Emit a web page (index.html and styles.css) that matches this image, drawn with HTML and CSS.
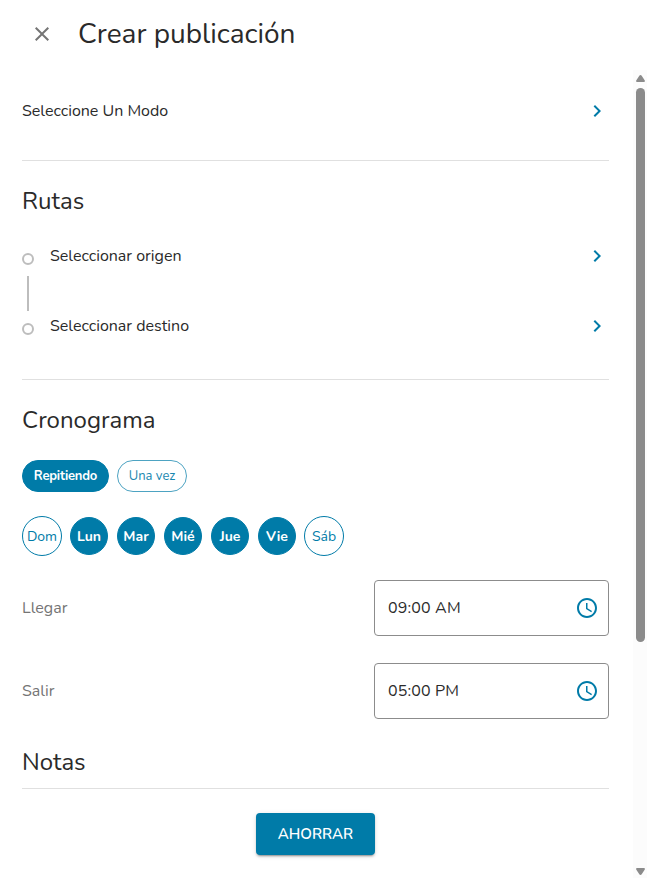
FILE: index.html
```html
<!DOCTYPE html>
<html lang="es">
<head>
  <meta charset="UTF-8">
  <meta name="viewport" content="width=device-width, initial-scale=1.0">
  <title>Crear publicación</title>
  <link rel="stylesheet" href="styles.css">
</head>
<body>
  <header class="header">
    <button class="close" aria-label="Cerrar">
      <svg width="24" height="24" viewBox="0 0 24 24"><path d="M19 6.41 17.59 5 12 10.59 6.41 5 5 6.41 10.59 12 5 17.59 6.41 19 12 13.41 17.59 19 19 17.59 13.41 12z"/></svg>
    </button>
    <h1 class="title">Crear publicación</h1>
  </header>
  <div class="container">
    <main class="content">
      <section class="mode">
        <span>Seleccione Un Modo</span>
        <svg class="chevron" width="24" height="24" viewBox="0 0 24 24"><path d="M10 6 8.59 7.41 13.17 12l-4.58 4.59L10 18l6-6z"/></svg>
      </section>

      <section class="routes">
        <h2>Rutas</h2>
        <div class="route">
          <span class="dot"></span>
          <span>Seleccionar origen</span>
          <svg class="chevron" width="24" height="24" viewBox="0 0 24 24"><path d="M10 6 8.59 7.41 13.17 12l-4.58 4.59L10 18l6-6z"/></svg>
        </div>
        <div class="line"></div>
        <div class="route">
          <span class="dot"></span>
          <span>Seleccionar destino</span>
          <svg class="chevron" width="24" height="24" viewBox="0 0 24 24"><path d="M10 6 8.59 7.41 13.17 12l-4.58 4.59L10 18l6-6z"/></svg>
        </div>
      </section>

      <section class="schedule">
        <h2>Cronograma</h2>
        <div class="chips">
          <button class="chip active">Repitiendo</button>
          <button class="chip once">Una vez</button>
        </div>
        <div class="days">
          <button class="day">Dom</button>
          <button class="day active">Lun</button>
          <button class="day active">Mar</button>
          <button class="day active">Mié</button>
          <button class="day active">Jue</button>
          <button class="day active">Vie</button>
          <button class="day">Sáb</button>
        </div>
        <div class="time-row">
          <label>Llegar</label>
          <div class="time-input">
            <span>09:00 AM</span>
            <svg width="24" height="24" viewBox="0 0 24 24"><path d="M11.99 2C6.47 2 2 6.48 2 12s4.47 10 9.99 10C17.52 22 22 17.52 22 12S17.52 2 11.99 2zM12 20c-4.42 0-8-3.58-8-8s3.58-8 8-8 8 3.58 8 8-3.58 8-8 8zm.5-13H11v6l5.25 3.15.75-1.23-4.5-2.67z"/></svg>
          </div>
        </div>
        <div class="time-row">
          <label>Salir</label>
          <div class="time-input">
            <span>05:00 PM</span>
            <svg width="24" height="24" viewBox="0 0 24 24"><path d="M11.99 2C6.47 2 2 6.48 2 12s4.47 10 9.99 10C17.52 22 22 17.52 22 12S17.52 2 11.99 2zM12 20c-4.42 0-8-3.58-8-8s3.58-8 8-8 8 3.58 8 8-3.58 8-8 8zm.5-13H11v6l5.25 3.15.75-1.23-4.5-2.67z"/></svg>
          </div>
        </div>
      </section>

      <section class="notes">
        <h2>Notas</h2>
      </section>
      <div class="actions">
        <button class="save">AHORRAR</button>
      </div>
    </main>
    <div class="scrollbar">
      <svg width="9" height="7" viewBox="0 0 9 7"><path d="M4.5 0Q5.2 0 5.7.8L8.8 5.6Q9.2 7 8 7H1Q-.2 7 .2 5.6L3.3.8Q3.8 0 4.5 0z"/></svg>
      <div class="thumb"></div>
      <svg class="down" width="9" height="7" viewBox="0 0 9 7"><path d="M4.5 7Q5.2 7 5.7 6.2L8.8 1.4Q9.2 0 8 0H1Q-.2 0 .2 1.4L3.3 6.2Q3.8 7 4.5 7z"/></svg>
    </div>
  </div>
</body>
</html>
```
FILE: styles.css
```css
* {
  margin: 0;
  padding: 0;
  box-sizing: border-box;
}

body {
  height: 878px;
  overflow: hidden;
  background-color: #fff;
  color: #2a2a2a;
  font-family: Nunito, Lato, sans-serif;
  font-size: 16px;
  line-height: 24px;
}

button {
  font-family: inherit;
  cursor: pointer;
}

svg {
  display: block;
  flex-shrink: 0;
}

.header {
  display: flex;
  align-items: center;
  height: 70px;
  padding: 0 30px 2px;
}

.close {
  border: none;
  background: none;
  fill: #757575;
}

.title {
  margin-left: 24px;
  font-size: 28px;
  font-weight: 400;
  line-height: 36px;
}

.container {
  display: flex;
  height: 808px;
}

.content {
  flex: 1;
  padding: 0 24px 0 22px;
}

.content h2 {
  font-size: 24px;
  font-weight: 400;
  line-height: 32px;
}

.mode {
  display: flex;
  align-items: center;
  justify-content: space-between;
  height: 91px;
  padding-bottom: 8px;
  border-bottom: 1px solid #e0e0e0;
}

.chevron {
  fill: #007ba8;
}

.routes {
  height: 219px;
  padding-top: 24px;
  border-bottom: 1px solid #e0e0e0;
}

.routes h2 {
  margin-bottom: 27px;
}

.route {
  display: flex;
  align-items: center;
  height: 24px;
}

.route .chevron {
  margin-left: auto;
}

.dot {
  width: 12px;
  height: 12px;
  margin: 6px 16px 0 0;
  border: 2px solid #bdbdbd;
  border-radius: 50%;
}

.line {
  width: 2px;
  height: 35px;
  margin: 8px 0 3px 5px;
  background-color: #bdbdbd;
}

.schedule {
  padding-top: 24px;
}

.chips {
  display: flex;
  gap: 8px;
  margin-top: 24px;
}

.chip {
  width: 87px;
  height: 32px;
  border: 1px solid #007ba8;
  border-radius: 16px;
  background-color: #fff;
  color: #007ba8;
  font-size: 13px;
}

.chip.once {
  width: 70px;
  border-color: #4da3c2;
  color: #1a88b0;
}

.chip.active,
.day.active {
  background-color: #007ba8;
  color: #fff;
  font-weight: 700;
}

.chip.active {
  letter-spacing: -0.2px;
}

.days {
  display: flex;
  align-items: center;
  gap: 9px;
  height: 40px;
  margin: 24px 0;
}

.day {
  width: 40px;
  height: 40px;
  border: 1px solid #007ba8;
  border-radius: 50%;
  background-color: #fff;
  color: #007ba8;
  font-size: 14px;
}

.day.active {
  width: 38px;
  height: 38px;
}

.day:first-child {
  margin-right: -1px;
}

.day:last-child {
  margin-left: -1px;
}

.time-row {
  display: flex;
  align-items: center;
  justify-content: space-between;
  margin-bottom: 27px;
}

.time-row label {
  color: #757575;
}

.time-input {
  display: flex;
  align-items: center;
  justify-content: space-between;
  width: 235px;
  height: 56px;
  padding: 0 9px 0 13px;
  border: 1px solid #8c8c8c;
  border-radius: 4px;
  letter-spacing: 0.15px;
}

.time-input svg {
  fill: #007ba8;
}

.notes {
  height: 43px;
  border-bottom: 1px solid #e0e0e0;
}

.actions {
  display: flex;
  justify-content: center;
  padding-top: 24px;
}

.save {
  width: 119px;
  height: 42px;
  border: none;
  border-radius: 4px;
  background-color: #007ba8;
  box-shadow: 0 3px 1px -2px rgba(0, 0, 0, 0.2), 0 2px 2px 0 rgba(0, 0, 0, 0.14), 0 1px 5px 0 rgba(0, 0, 0, 0.12);
  color: #fff;
  font-size: 15px;
  font-weight: 600;
}

.scrollbar {
  display: flex;
  flex-direction: column;
  align-items: center;
  width: 14px;
  padding: 5px 0 3px 1px;
  background-color: #fcfcfc;
  fill: #8b8b8b;
}

.thumb {
  width: 9px;
  height: 554px;
  margin-top: 6px;
  border-radius: 5px;
  background-color: #8b8b8b;
}

.down {
  margin-top: auto;
}
```
